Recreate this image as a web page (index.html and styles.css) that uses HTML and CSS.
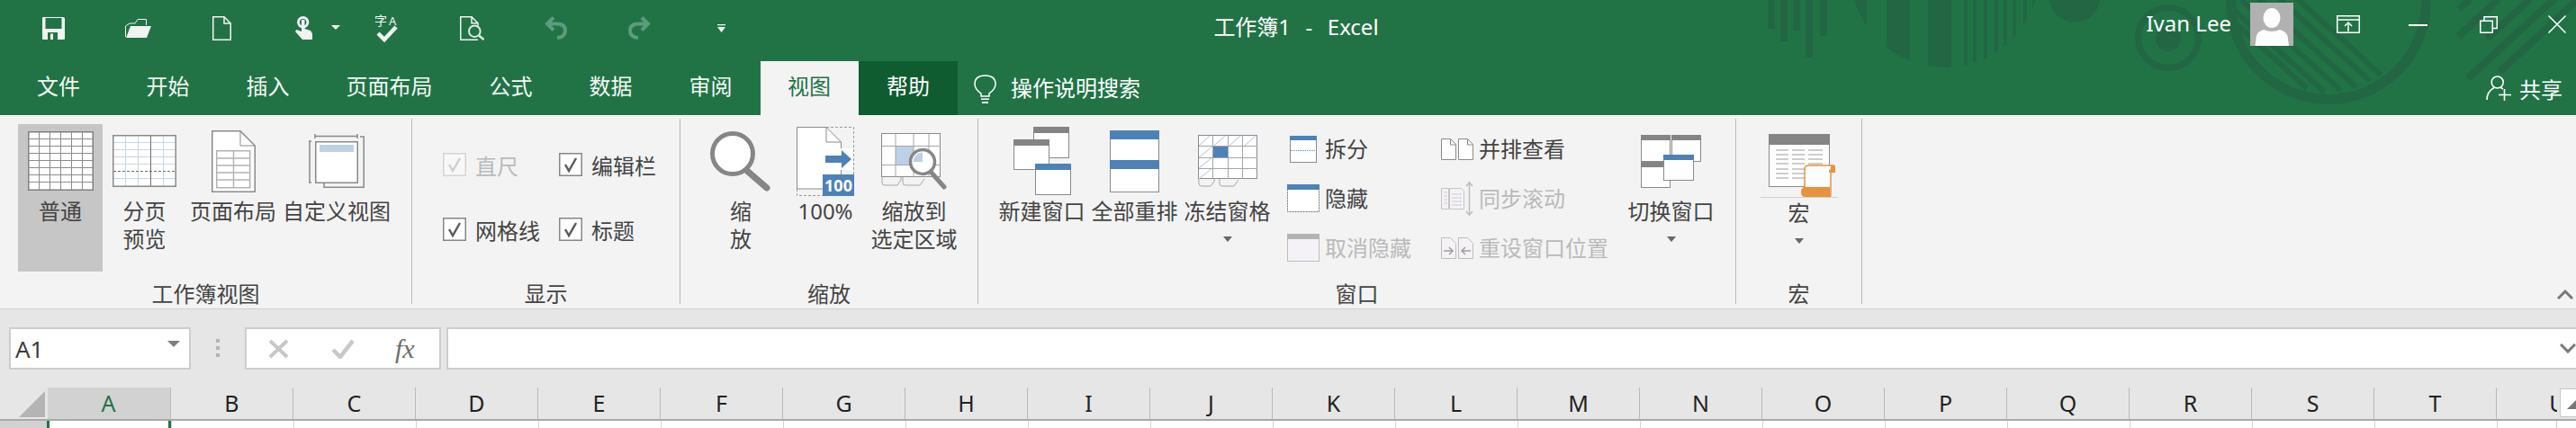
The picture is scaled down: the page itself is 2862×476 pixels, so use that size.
FILE: index.html
```html
<!DOCTYPE html>
<html lang="zh-CN">
<head>
<meta charset="utf-8">
<title>工作簿1 - Excel</title>
<link rel="stylesheet" href="styles.css">
</head>
<body>
<div class="app">
  <header class="head">
    <svg class="pattern" width="2862" height="128" viewBox="0 0 2862 128">
      <defs>
        <clipPath id="c1"><circle cx="2161" cy="-30" r="105"/></clipPath>
        <clipPath id="c2"><circle cx="2587" cy="2" r="108"/></clipPath>
      </defs>
      <g fill="#226644">
        <rect x="1964" y="0" width="8" height="32"/>
        <rect x="1978" y="0" width="8" height="46"/>
        <rect x="1992" y="0" width="8" height="34"/>
        <rect x="2006" y="0" width="8" height="64"/>
        <rect x="2022" y="0" width="8" height="40"/>
        <g clip-path="url(#c1)">
          <rect x="2050" y="0" width="24" height="80"/>
          <rect x="2096" y="0" width="26" height="80"/>
          <rect x="2142" y="0" width="26" height="80"/>
          <rect x="2182" y="0" width="4" height="80"/>
          <rect x="2192" y="0" width="4" height="80"/>
          <rect x="2204" y="0" width="4" height="80"/>
          <rect x="2216" y="0" width="4" height="80"/>
          <rect x="2226" y="0" width="4" height="80"/>
          <rect x="2236" y="0" width="4" height="80"/>
          <rect x="2248" y="0" width="4" height="80"/>
          <rect x="2258" y="0" width="4" height="80"/>
        </g>
        <circle cx="2305" cy="-3" r="28"/>
        <circle cx="2409" cy="43" r="14"/>
      </g>
      <circle cx="2409" cy="42" r="33.5" fill="none" stroke="#226644" stroke-width="7"/>
      <circle cx="2587" cy="2" r="108.5" fill="none" stroke="#226644" stroke-width="11"/>
      <g clip-path="url(#c2)" stroke="#226644" stroke-width="6" fill="none">
        <path d="M2645 83l-110-100M2633 90l-110-100M2618 97l-110-100M2600 100l-110-100M2582 102l-110-100M2563 98l-110-100"/>
      </g>
      <g stroke="#226644" stroke-width="8" fill="none">
        <path d="M2732 10l12-11M2732 40l44-41M2763 43l48-44M2742 87l101-93M2777 80l86-80"/>
      </g>
    </svg>

    <div class="titlebar">
      <div class="quick">
        <div class="qa"><svg width="25" height="25" viewBox="0 0 25 25"><path fill="#f2f2f2" d="M0 1q0-1 1-1h22q2 0 2 2v22q0 1-1 1H1q-1 0-1-1z"/><rect x="3.5" y="1" width="18" height="12" fill="#217346"/><rect x="6" y="17" width="11" height="8" fill="#217346"/><rect x="9" y="18.5" width="3" height="6.5" fill="#f2f2f2"/></svg></div>
        <div class="qa"><svg width="29" height="21" viewBox="0 0 29 21"><path fill="none" stroke="#f2f2f2" d="M.5 20V8L5 5h6l3-4.500h9.500V7"/><path fill="#f2f2f2" d="M6 8h23l-5 13H1z"/></svg></div>
        <div class="qa"><svg width="21" height="27" viewBox="0 0 21 27"><path fill="none" stroke="#f2f2f2" stroke-width="1.500" d="M.75.75H13L20.250 8v18.250H.75zM13 .75V8h7.250"/></svg></div>
        <div class="qa qa-touch"><svg width="52" height="26" viewBox="0 0 52 26"><circle cx="9.700" cy="6.700" r="5.200" fill="none" stroke="#f2f2f2" stroke-width="3"/><path fill="#f2f2f2" d="M8 4h3.500v10l6.500 2 2 3.500V26H9L1 17l1.500-2L8 17z"/><path fill="#f2f2f2" d="M41 10h10l-5 5z"/></svg></div>
        <div class="qa qa-spell"><svg width="30" height="40" viewBox="0 0 30 40"><text class="svg-cjk" x="0" y="20" font-size="14" fill="#f2f2f2">字</text><text class="svg-lat" x="16" y="20" font-size="13" fill="#f2f2f2">A</text><path fill="none" stroke="#f2f2f2" stroke-width="4.500" d="M4 29l7 7 13-14"/></svg></div>
        <div class="qa"><svg width="27" height="27" viewBox="0 0 27 27"><path fill="none" stroke="#f2f2f2" stroke-width="1.500" d="M20 26.250H.75V.75H13l7 7v3M13 .75v7h7"/><circle cx="16.300" cy="16.700" r="6.300" fill="none" stroke="#dfe9e3" stroke-width="2"/><path stroke="#dfe9e3" stroke-width="2.500" d="M21 21.500l5.500 4.500"/></svg></div>
        <div class="qa"><svg width="26" height="26" viewBox="0 0 26 26"><path fill="none" stroke="#5a9c7b" stroke-width="4" d="M10 1.500L3 8.500l7 7M3 8.500h10q10 0 10 7.500t-9 8"/></svg></div>
        <div class="qa"><svg width="26" height="26" viewBox="0 0 26 26"><path fill="none" stroke="#5a9c7b" stroke-width="4" d="M16 1.500l7 7-7 7M23 8.500H13Q3 8.500 3 16t9 8"/></svg></div>
        <div class="qa"><svg width="9" height="9" viewBox="0 0 9 9"><path fill="#f2f2f2" d="M0 0h9v1.300H0zM0 3h9L4.500 9z"/></svg></div>
      </div>
      <div class="doc-title">工作簿1&nbsp; -&nbsp; Excel</div>
      <div class="account">
        <span class="user">Ivan Lee</span>
        <svg class="avatar" width="48" height="48" viewBox="0 0 48 48"><rect width="48" height="48" fill="#b1b1b1"/><ellipse cx="24" cy="17" rx="9.500" ry="11" fill="#fff"/><path fill="#fff" d="M5.500 48L7 37q1-5 8-7 9 4 18 0 7 2 8.500 7l1.500 11z"/></svg>
        <svg class="win-display" width="26" height="20" viewBox="0 0 26 20"><path fill="none" stroke="#fff" stroke-width="1.500" d="M.75.75h24.500v18.500H.75zM.75 5h24.500M13 18V8M9 12l4-4 4 4"/></svg>
        <svg class="win-min" width="21" height="2" viewBox="0 0 21 2"><rect width="21" height="2" fill="#fff"/></svg>
        <svg class="win-restore" width="20" height="19" viewBox="0 0 20 19"><path fill="none" stroke="#fff" stroke-width="1.500" d="M.75 5.250h13.500v13H.75zM5 5V.75h14.250V13.500H14.500"/></svg>
        <svg class="win-close" width="20" height="20" viewBox="0 0 20 20"><path fill="none" stroke="#fff" stroke-width="1.500" d="M.5.5l19 19M19.500.5l-19 19"/></svg>
      </div>
    </div>

    <nav class="tabs">
      <div class="tab tab-file">文件</div>
      <div class="tab">开始</div>
      <div class="tab">插入</div>
      <div class="tab">页面布局</div>
      <div class="tab">公式</div>
      <div class="tab">数据</div>
      <div class="tab">审阅</div>
      <div class="tab tab-active">视图</div>
      <div class="tab tab-help">帮助</div>
      <div class="tell">
        <svg width="25" height="32" viewBox="0 0 25 32"><path fill="none" stroke="#fff" stroke-width="1.500" d="M8 21Q1 16 1 10.500 1 1 12.500 1T24 10.500Q24 16 17 21v3H8z"/><path fill="#fff" d="M8 26.500h9V28H8zM9 30h7v2H9z"/></svg>
        <span>操作说明搜索</span>
      </div>
      <div class="share">
        <svg width="28" height="28" viewBox="0 0 28 28"><g fill="none" stroke="#fff" stroke-width="1.600"><circle cx="12.700" cy="7.500" r="6.500"/><path d="M1 27q0-9 8-13.500M16.500 13.500l2.500 1.500M14 21.500h14M20.500 15v13"/></g></svg>
        <span>共享</span>
      </div>
    </nav>
  </header>

  <section class="ribbon">
    <div class="group g-views">
      <div class="group-body">
        <div class="big b-normal is-on">
          <div class="big-icon"><svg width="73" height="66" viewBox="0 0 73 66"><rect x=".75" y=".75" width="71.500" height="64.500" fill="#fff" stroke="#7f7f7f" stroke-width="1.500"/><path fill="none" stroke="#8c8c8c" d="M12.500 1v64M24.500 1v64M36.500 1v64M48.500 1v64M60.500 1v64M1 8.500h71M1 16.500h71M1 24.500h71M1 32.500h71M1 40.500h71M1 48.500h71M1 56.500h71"/></svg></div>
          <div class="big-text">普通</div>
        </div>
        <div class="big b-break">
          <div class="big-icon"><svg width="71" height="58" viewBox="0 0 71 58"><rect x=".75" y=".75" width="69.500" height="56.500" fill="#fff"/><path fill="none" stroke="#c6d5e6" d="M14.500 1v56M28.500 1v56M56.500 1v56M1 8.500h69M1 16.500h69M1 24.500h69M1 32.500h69M1 48.500h69"/><path fill="none" stroke="#6f6f6f" d="M42.500 1v56"/><path fill="none" stroke="#6f6f6f" stroke-dasharray="3 2" d="M1 40.500h69"/><rect x=".75" y=".75" width="69.500" height="56.500" fill="none" stroke="#8a8a8a" stroke-width="1.500"/></svg></div>
          <div class="big-text">分页<br>预览</div>
        </div>
        <div class="big b-layout">
          <div class="big-icon"><svg width="49" height="69" viewBox="0 0 49 69"><path fill="#fff" stroke="#8a8a8a" stroke-width="1.500" d="M.75.75H32L48.250 17v51.250H.75z"/><path fill="none" stroke="#8a8a8a" d="M32 1v16h16"/><path fill="none" stroke="#b3b3b3" stroke-width="1.500" d="M5.750 22.750h37v41h-37zM24.500 23v41M6 31h37M6 39h37M6 47h37M6 55h37"/></svg></div>
          <div class="big-text">页面布局</div>
        </div>
        <div class="big b-custom">
          <div class="big-icon"><svg width="62" height="60" viewBox="0 0 62 60"><path fill="none" stroke="#8a8a8a" stroke-width="1.500" d="M7 2.500h47M7 0v5M54 0v5M1 8v46M0 8h3M0 54h3M57 3h4.250v56.250H17V54"/><rect x="7.750" y="8.750" width="46.500" height="45.500" fill="#fff" stroke="#8a8a8a" stroke-width="1.500"/><rect x="12" y="12" width="38" height="8" fill="#bdd0e6"/></svg></div>
          <div class="big-text">自定义视图</div>
        </div>
      </div>
      <div class="group-label">工作簿视图</div>
    </div>

    <div class="group g-show">
      <div class="check-grid">
        <div class="check is-off"><svg class="box" width="26" height="26" viewBox="0 0 26 26"><rect x=".75" y=".75" width="24.500" height="24.500" fill="#f8f8f8" stroke="#d4d4d4" stroke-width="1.500"/><path fill="none" stroke="#cfcfcf" stroke-width="2.500" d="M7 13l4 7 8-14"/></svg><span>直尺</span></div>
        <div class="check"><svg class="box" width="26" height="26" viewBox="0 0 26 26"><rect x=".75" y=".75" width="24.500" height="24.500" fill="#fff" stroke="#868686" stroke-width="1.500"/><path fill="none" stroke="#5c5c5c" stroke-width="2.500" d="M7 13l4 7 8-14"/></svg><span>编辑栏</span></div>
        <div class="check"><svg class="box" width="26" height="26" viewBox="0 0 26 26"><rect x=".75" y=".75" width="24.500" height="24.500" fill="#fff" stroke="#868686" stroke-width="1.500"/><path fill="none" stroke="#5c5c5c" stroke-width="2.500" d="M7 13l4 7 8-14"/></svg><span>网格线</span></div>
        <div class="check"><svg class="box" width="26" height="26" viewBox="0 0 26 26"><rect x=".75" y=".75" width="24.500" height="24.500" fill="#fff" stroke="#868686" stroke-width="1.500"/><path fill="none" stroke="#5c5c5c" stroke-width="2.500" d="M7 13l4 7 8-14"/></svg><span>标题</span></div>
      </div>
      <div class="group-label">显示</div>
    </div>

    <div class="group g-zoom">
      <div class="group-body">
        <div class="big b-zoom">
          <div class="big-icon"><svg width="68" height="67" viewBox="0 0 68 67"><circle cx="25" cy="25" r="22.500" fill="#fff" stroke="#868686" stroke-width="5"/><path stroke="#868686" stroke-width="7" stroke-linecap="round" d="M41 44l22 19"/></svg></div>
          <div class="big-text">缩<br>放</div>
        </div>
        <div class="big b-zoom">
          <div class="big-icon"><svg width="64" height="77" viewBox="0 0 64 77"><path fill="none" stroke="#9a9a9a" stroke-dasharray="3 2" d="M33 .5h30.500V54M.5 69v7.500H29"/><path fill="#fff" stroke="#8a8a8a" d="M.5.5H33L49.500 17v52H.5z"/><path fill="none" stroke="#8a8a8a" d="M33 1v16h16"/><rect x="30" y="24" width="33" height="24" fill="#fff"/><path fill="#4d82b8" d="M32 32h18v-6l11 10-11 10v-6H32z"/><rect x="29" y="53" width="35" height="24" fill="#4d82b8"/><text class="svg-lat" x="46.500" y="72" text-anchor="middle" font-size="18" font-weight="700" fill="#fff">100</text></svg></div>
          <div class="big-text">100%</div>
        </div>
        <div class="big b-zoom">
          <div class="big-icon"><svg width="73" height="63" viewBox="0 0 73 63"><rect x=".5" y=".5" width="65" height="48" fill="#fff" stroke="#8a8a8a"/><rect x="16" y="14.500" width="20" height="21" fill="#bdd0e6"/><path fill="none" stroke="#a6a6a6" d="M16 1v48M36 1v48M53 1v48M1 14.500h65M1 35.500h65"/><path fill="none" stroke="#a6a6a6" d="M1 49v6q0 3 3 3h14l4-6V49M24 49v6q0 3 3 3h16l5-7"/><circle cx="46" cy="32" r="13.500" fill="#fff" stroke="#868686" stroke-width="3.500"/><path fill="#bdd0e6" d="M46 21.500V32H35.500a10.500 10.500 0 0 1 10.500-10.500z"/><path stroke="#868686" stroke-width="5" stroke-linecap="round" d="M55 43l15 17"/></svg></div>
          <div class="big-text">缩放到<br>选定区域</div>
        </div>
      </div>
      <div class="group-label">缩放</div>
    </div>

    <div class="group g-window">
      <div class="group-body">
        <div class="big b-win">
          <div class="big-icon"><svg width="64" height="76" viewBox="0 0 64 76"><rect x="22.500" y=".5" width="39" height="34" fill="#fff" stroke="#8a8a8a"/><rect x="22" y="0" width="40" height="7" fill="#848484"/><rect x=".5" y="14.500" width="39" height="33" fill="#fff" stroke="#8a8a8a"/><rect x="0" y="14" width="40" height="7" fill="#848484"/><rect x="24.500" y="41.500" width="39" height="34" fill="#fff" stroke="#8a8a8a"/><rect x="24" y="41" width="40" height="7" fill="#4d82b8"/></svg></div>
          <div class="big-text">新建窗口</div>
        </div>
        <div class="big b-win">
          <div class="big-icon"><svg width="55" height="69" viewBox="0 0 55 69"><rect x=".5" y=".5" width="54" height="68" fill="#fff" stroke="#8a8a8a"/><rect width="55" height="10" fill="#4d82b8"/><rect y="33" width="55" height="10" fill="#4d82b8"/></svg></div>
          <div class="big-text">全部重排</div>
        </div>
        <div class="big b-win">
          <div class="big-icon"><svg width="66" height="58" viewBox="0 0 66 58"><rect x=".5" y=".5" width="65" height="48" fill="#fff" stroke="#8a8a8a"/><path fill="none" stroke="#a8c3df" d="M1 12L13 1M18 12L30 1M35 12L47 1M52 12L64 1M1 25l15-12M1 37l15-12M1 49l15-12"/><rect x="17" y="13" width="16" height="12" fill="#4d82b8"/><path fill="none" stroke="#a6a6a6" d="M16.500 1v48M33.500 1v48M49.500 1v48M1 12.500h65M1 25.500h65M1 37.500h65"/><path fill="none" stroke="#a6a6a6" d="M1 49v5q0 3 3 3h10l4-5v-3M24 49v5q0 3 3 3h13l5-7"/></svg></div>
          <div class="big-text">冻结窗格</div>
          <div class="caret"></div>
        </div>
        <div class="small-col col-a">
          <div class="small"><span class="small-icon"><svg width="30" height="30" viewBox="0 0 30 30"><rect x=".5" y=".5" width="29" height="29" fill="#fff" stroke="#8a8a8a"/><rect width="30" height="5" fill="#4d82b8"/><path stroke="#4d82b8" stroke-dasharray="1 1" d="M1 16.500h28"/></svg></span><span class="small-text">拆分</span></div>
          <div class="small"><span class="small-icon"><svg width="36" height="31" viewBox="0 0 36 31"><rect x=".5" y=".5" width="35" height="30" fill="#fff" stroke="#777" stroke-dasharray="2 1"/><rect width="36" height="6" fill="#4d82b8"/></svg></span><span class="small-text">隐藏</span></div>
          <div class="small is-off"><span class="small-icon"><svg width="36" height="31" viewBox="0 0 36 31"><rect x=".5" y=".5" width="35" height="30" fill="#f5f2f7" stroke="#bdbdbd"/><rect width="36" height="6" fill="#b3b3b3"/></svg></span><span class="small-text">取消隐藏</span></div>
        </div>
        <div class="small-col col-b">
          <div class="small"><span class="small-icon"><svg width="36" height="24" viewBox="0 0 36 24"><path fill="#fff" stroke="#8a8a8a" d="M.5.5h10l6 6v17H.5zM19.500.5h10l6 6v17h-16z"/><path fill="none" stroke="#8a8a8a" d="M10.500 1v6h6M29.500 1v6h6"/></svg></span><span class="small-text">并排查看</span></div>
          <div class="small is-off"><span class="small-icon"><svg width="38" height="40" viewBox="0 0 38 40"><path fill="#f5f2f7" stroke="#c4c4c4" d="M.5 8.500h8v23h-8zM9.500 8.500h13l3 3v20h-16z"/><path fill="none" stroke="#cfcfcf" d="M3 13h4M3 17h4M3 21h4M3 25h4M12 15h11M12 19h11M12 23h11M12 27h11"/><path fill="none" stroke="#bdbdbd" stroke-width="1.500" d="M31.500 2v36M28 6l3.500-4 3.500 4M28 34l3.500 4 3.500-4"/></svg></span><span class="small-text">同步滚动</span></div>
          <div class="small is-off"><span class="small-icon"><svg width="36" height="24" viewBox="0 0 36 24"><path fill="#f5f2f7" stroke="#bdbdbd" d="M.5.5h10l6 6v17H.5zM19.500.5h10l6 6v17h-16z"/><path fill="none" stroke="#9f9f9f" stroke-width="1.500" d="M3 15h10M9 11l4 4-4 4M33 15H23M27 11l-4 4 4 4"/></svg></span><span class="small-text">重设窗口位置</span></div>
        </div>
        <div class="big b-win">
          <div class="big-icon"><svg width="68" height="59" viewBox="0 0 68 59"><rect x=".5" y=".5" width="32" height="29" fill="#fff" stroke="#8a8a8a"/><rect width="33" height="6" fill="#848484"/><rect x="34.500" y=".5" width="32" height="29" fill="#fff" stroke="#8a8a8a"/><rect x="34" width="33" height="6" fill="#848484"/><rect x=".5" y="30.500" width="32" height="28" fill="#fff" stroke="#8a8a8a"/><rect y="30" width="33" height="6" fill="#848484"/><rect x="25.500" y="22.500" width="33" height="28" fill="#fff" stroke="#8a8a8a"/><rect x="25" y="22" width="34" height="6" fill="#4d82b8"/></svg></div>
          <div class="big-text">切换窗口</div>
          <div class="caret"></div>
        </div>
      </div>
      <div class="group-label">窗口</div>
    </div>

    <div class="group g-macro">
      <div class="group-body">
        <div class="big b-win b-macro">
          <div class="big-icon"><svg width="86" height="71" viewBox="0 0 86 71"><rect x="9.500" y=".5" width="67" height="58" fill="#fff" stroke="#8a8a8a"/><rect x="9" width="68" height="12" fill="#848484"/><path fill="none" stroke="#bdbdbd" stroke-width="1.500" d="M17 18h14M35 18h14M53 18h16M17 23h14M35 23h14M53 23h16M17 28h14M35 28h14M53 28h16M17 33h14M35 33h14M53 33h16M17 39h14M35 39h14M17 44h14M35 44h14M17 49h14M35 49h14"/><path fill="#fff" stroke="#e8913f" stroke-width="1.500" d="M49 61V39q0-4 4-4h28v4.500M49 61q4 8 0 9.500h26q3 0 3-4V39"/><path fill="#e8913f" d="M78 35h5q0 0 0 3v5h-5zM50 59h27v3q0 8 2 8H50q-5 0-5-5.500t5-5.500z"/><rect y="70" width="86" height="1" fill="#cfcfcf"/></svg></div>
          <div class="big-text">宏</div>
          <div class="caret"></div>
        </div>
      </div>
      <div class="group-label">宏</div>
    </div>

    <svg class="collapse" width="18" height="12" viewBox="0 0 18 12"><path fill="none" stroke="#777" stroke-width="3" d="M1 11l8-8 8 8"/></svg>
  </section>

  <section class="formula">
    <div class="namebox"><span>A1</span><div class="name-caret"></div></div>
    <div class="grip"><i></i><i></i><i></i></div>
    <div class="fx-box">
      <svg class="fx-x" width="23" height="22" viewBox="0 0 23 22"><path fill="none" stroke="#c8c8c8" stroke-width="4" d="M2 2l19 18M21 2L2 20"/></svg>
      <svg class="fx-ok" width="26" height="22" viewBox="0 0 26 22"><path fill="none" stroke="#c8c8c8" stroke-width="4.500" d="M2 12l8 8L24 2"/></svg>
      <span class="fx-label">fx</span>
    </div>
    <div class="fx-input"><svg width="18" height="11" viewBox="0 0 18 11"><path fill="none" stroke="#777" stroke-width="3" d="M1 1l8 8 8-8"/></svg></div>
  </section>

  <section class="sheet">
    <div class="col-row">
      <div class="corner"><svg width="30" height="30" viewBox="0 0 30 30"><path fill="#b4b4b4" d="M29 0v29H0z"/></svg></div>
      <div class="cols">
        <div class="col col-on">A</div><div class="col">B</div><div class="col">C</div><div class="col">D</div><div class="col">E</div><div class="col">F</div><div class="col">G</div><div class="col">H</div><div class="col">I</div><div class="col">J</div><div class="col">K</div><div class="col">L</div><div class="col">M</div><div class="col">N</div><div class="col">O</div><div class="col">P</div><div class="col">Q</div><div class="col">R</div><div class="col">S</div><div class="col">T</div><div class="col">U</div>
      </div>
      <div class="scroll-top"><div class="scroll-up"></div></div>
    </div>
    <div class="cell-row">
      <div class="row-head"></div>
      <div class="cells">
        <div class="cell cell-sel"></div><div class="cell"></div><div class="cell"></div><div class="cell"></div><div class="cell"></div><div class="cell"></div><div class="cell"></div><div class="cell"></div><div class="cell"></div><div class="cell"></div><div class="cell"></div><div class="cell"></div><div class="cell"></div><div class="cell"></div><div class="cell"></div><div class="cell"></div><div class="cell"></div><div class="cell"></div><div class="cell"></div><div class="cell"></div><div class="cell"></div>
      </div>
      <div class="scroll-rest"></div>
    </div>
  </section>
</div>
</body>
</html>
```
FILE: styles.css
```css
* { box-sizing: border-box; }
html, body { margin: 0; padding: 0; }
body {
  width: 2862px;
  height: 476px;
  overflow: hidden;
  background: #fff;
  font-family: "Noto Sans", "Noto Sans CJK SC", sans-serif;
  font-size: 24px;
  color: #444;
}
svg { display: block; flex: none; }
.svg-cjk { font-family: "Noto Sans CJK SC", sans-serif; }
.svg-lat { font-family: "Noto Sans", sans-serif; }

.app { width: 2862px; height: 476px; display: flex; flex-direction: column; }

.head { position: relative; height: 128px; background: #217346; color: #fff; flex: none; }
.pattern { position: absolute; left: 0; top: 0; }

.titlebar {
  position: relative;
  height: 68px;
  display: grid;
  grid-template-columns: 1fr auto 1fr;
}
.quick {
  display: grid;
  grid-template-columns: 93px 94px 92px 92px 94px 93px 93px 92px 91px;
  padding-left: 13px;
  height: 62px;
}
.qa { display: flex; align-items: center; justify-content: center; }
.qa-touch { justify-content: flex-start; padding-left: 35px; }
.qa-spell svg { margin-top: -6px; }
.doc-title { line-height: 60px; height: 62px; white-space: nowrap; margin-left: 18px; word-spacing: 2px; }
.account { display: flex; justify-content: flex-end; padding-right: 11px; align-items: flex-start; }
.user { margin-top: 9px; line-height: 34px; white-space: nowrap; }
.avatar { margin: 3px 0 0 21px; }
.win-display { margin: 17px 0 0 48px; }
.win-min { margin: 27px 0 0 54px; }
.win-restore { margin: 18px 0 0 58px; }
.win-close { margin: 17px 0 0 56px; }

.tabs { position: relative; height: 60px; display: flex; align-items: stretch; }
.tab { padding: 0 31.5px; line-height: 56px; white-space: nowrap; color: #f4f8f5; }
.tab-file { padding: 0 42px 0 41px; }
.tab-active { background: #f3f3f3; color: #217346; padding: 0 31px 0 30px; }
.tab-help { background: #0f5c30; color: #fff; padding: 0 31px; }
.tell { display: flex; align-items: center; margin-left: 18px; gap: 16px; padding-top: 2px; }
.tell span { line-height: 56px; margin-top: -3px; }
.share { display: flex; align-items: center; margin-left: auto; padding-right: 15px; gap: 9px; }

.ribbon {
  flex: none;
  height: 216px;
  background: #f3f3f3;
  border-bottom: 1px solid #cfcfcf;
  padding-top: 4px;
  display: flex;
  align-items: flex-start;
}
.group {
  height: 206px;
  border-right: 1px solid #b8b8b8;
  display: flex;
  flex-direction: column;
  justify-content: space-between;
}
.g-views { width: 458px; }
.g-show { width: 298px; }
.g-zoom { width: 331px; }
.g-window { width: 842px; }
.g-macro { width: 140px; }
.group-body { display: flex; padding-top: 6px; }
.g-views .group-body { padding-left: 20px; }
.g-zoom .group-body { padding-left: 20px; }
.g-window .group-body { padding-left: 19px; }
.g-macro .group-body { padding-left: 18px; }
.group-label { height: 22px; line-height: 22px; text-align: center; white-space: nowrap; }

.big { display: flex; flex-direction: column; align-items: center; height: 164px; white-space: nowrap; }
.big-icon { height: 82px; display: flex; align-items: center; justify-content: center; }
.big-text { line-height: 31px; text-align: center; margin-top: -1px; }
.is-on { background: #c6c6c6; }
.b-normal { width: 94px; }
.b-break { width: 93px; }
.b-layout { width: 104px; }
.b-custom { width: 126px; }
.b-zoom { width: 94px; }
.b-zoom:last-child { width: 103px; }
.b-win { width: 103px; }
.b-macro .big-icon { height: 84px; align-items: flex-start; padding-top: 11px; }
.caret {
  width: 0; height: 0;
  margin-top: 13px;
  border-left: 5px solid transparent;
  border-right: 5px solid transparent;
  border-top: 6px solid #666;
}

.check-grid {
  padding: 15px 0 0 34px;
  display: grid;
  grid-template-columns: 129px auto;
  grid-auto-rows: 72px;
}
.check { display: flex; align-items: center; gap: 10px; white-space: nowrap; }
.is-off { color: #bababa; }

.small-col { display: flex; flex-direction: column; }
.col-a { width: 170px; margin-left: 15px; }
.col-b { width: 205px; }
.small { height: 55px; display: flex; align-items: center; white-space: nowrap; gap: 6px; }
.small-text { margin-top: -2px; }
.small-icon { width: 36px; display: flex; justify-content: center; }
.col-b .small { gap: 5px; }
.col-b .small-icon { width: 38px; justify-content: flex-start; padding-left: 1px; }

.collapse { margin: 189px 3px 0 auto; }

.formula {
  flex: none;
  height: 87px;
  background: #e6e6e6;
  padding: 20px 0 0 10px;
  display: flex;
  align-items: flex-start;
}
.namebox {
  width: 202px; height: 47px;
  background: #fff;
  border: 2px solid #cdcdcd;
  display: flex; align-items: center; justify-content: space-between;
  padding: 0 10px 0 5px;
  color: #3c3c3c;
  font-size: 26px;
  line-height: 1;
}
.name-caret {
  width: 0; height: 0;
  margin-top: -10px;
  border-left: 7px solid transparent;
  border-right: 7px solid transparent;
  border-top: 7px solid #7f7f7f;
}
.grip { width: 60px; height: 47px; display: flex; flex-direction: column; align-items: center; gap: 4px; padding-top: 13px; }
.grip i { display: block; width: 4px; height: 4px; background: #b4b4b4; }
.fx-box {
  width: 218px; height: 47px;
  background: #fff;
  border: 2px solid #cdcdcd;
  display: flex; align-items: center;
  padding-left: 24px;
}
.fx-ok { margin-left: 47px; }
.fx-label {
  margin-left: 45px;
  font-family: "Liberation Serif", serif;
  font-style: italic;
  font-size: 30px;
  color: #6e6e6e;
  line-height: 1;
}
.fx-input {
  flex: 1;
  height: 47px;
  margin-left: 6px;
  background: #fff;
  border: 2px solid #cdcdcd;
  border-right: 0;
  display: flex; align-items: center; justify-content: flex-end;
}

.sheet { flex: 1; display: flex; flex-direction: column; background: #fff; overflow: hidden; }
.col-row { height: 37px; display: flex; background: #e6e6e6; border-bottom: 2px solid #a9a9a9; flex: none; }
.corner { width: 53px; padding: 4px 0 0 21px; }
.cols { width: 2788px; display: flex; overflow: hidden; }
.col {
  width: 136px; flex: none;
  border-right: 1px solid #b9b9b9;
  text-align: center;
  font-size: 25px;
  line-height: 35px;
  color: #222;
}
.col-on { width: 137px; background: #d2d2d2; color: #217346; padding-right: 1px; }
.scroll-top { flex: 1; padding: 1px 0 3px 3px; }
.scroll-up {
  height: 32px;
  background: #fff;
  border: 1px solid #c6c6c6;
  border-right: 0;
  position: relative;
  overflow: hidden;
}
.scroll-up::after {
  content: "";
  position: absolute;
  left: 7px; top: 12px;
  border-left: 10px solid transparent;
  border-bottom: 10px solid #777;
  border-right: 10px solid transparent;
}
.cell-row { flex: 1; display: flex; }
.row-head { width: 52px; background: #d2d2d2; }
.cells { width: 2789px; display: flex; overflow: hidden; border-right: 1px solid #c6c6c6; }
.cell { width: 136px; flex: none; border-right: 1px solid #d4d4d4; }
.cell-sel { width: 139px; position: relative; }
.cell-sel::after {
  content: "";
  position: absolute;
  left: 0; top: -3px; right: 0; height: 14px;
  border: 3px solid #217346;
  border-bottom: 0;
}
.scroll-rest { flex: 1; background: #fff; }
```
